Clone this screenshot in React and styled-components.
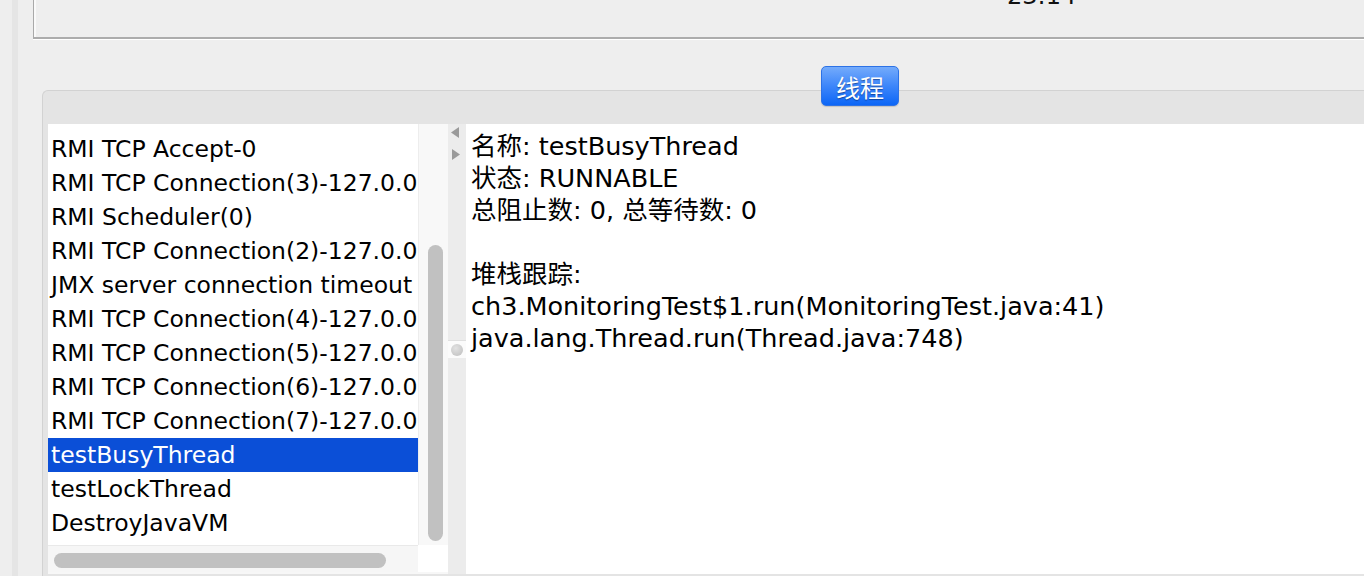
import styled, { createGlobalStyle } from "styled-components";

const GlobalStyle = createGlobalStyle`
  html, body {
    margin: 0;
    padding: 0;
    background: #eeeeee;
    overflow: hidden;
  }
  #root {
    height: 576px;
  }
`;

const Window = styled.div`
  display: flex;
  height: 576px;
  padding-left: 12px;
  box-sizing: border-box;
  overflow: hidden;
  font-family: "DejaVu Sans", "Noto Sans CJK SC", sans-serif;
  color: #000;
`;

const Rail = styled.div`
  width: 6px;
  flex-shrink: 0;
  background: #e5e5e5;
`;

const Main = styled.div`
  flex: 1;
  min-width: 0;
  display: flex;
  flex-direction: column;
  padding-left: 15px;
`;

// etched box that holds the summary above, mostly scrolled out of view
const SummaryBox = styled.div`
  height: 37px;
  flex-shrink: 0;
  display: flex;
  align-items: flex-start;
  padding-left: 973px;
  border-left: 1px solid #a9a9a9;
  border-bottom: 2px solid #acacac;
  box-shadow: 0 1px 0 #ffffff, inset 2px 0 0 #f9f9f9;
  overflow: visible;
`;

const Clock = styled.span`
  margin-top: -18px;
  font-size: 24px;
  line-height: 28px;
  color: #111;
`;

const TabPanel = styled.section`
  flex: 1;
  margin: 51px 0 0 9px;
  padding-left: 5px;
  display: flex;
  flex-direction: column;
  background: #e4e4e4;
  border-top: 1px solid #d2d2d2;
  border-left: 1px solid #d2d2d2;
  border-top-left-radius: 6px;
`;

const TabHeader = styled.div`
  height: 40px;
  margin: -25px 0 18px;
  padding-left: 773px;
  display: flex;
`;

const TabButton = styled.button`
  width: 78px;
  height: 40px;
  padding: 0;
  border: 1px solid #2c72e6;
  border-radius: 5px;
  background: linear-gradient(#74abfb, #3d86fa 50%, #0c66f6);
  color: #fff;
  font-family: "Noto Sans CJK SC", sans-serif;
  font-size: 24px;
  text-shadow: 0 1px 1px rgba(0, 30, 90, 0.55);
  box-shadow: 0 1px 1px rgba(0, 0, 0, 0.15);
`;

const Content = styled.div`
  height: 450px;
  display: flex;
  background: #fff;
`;

const ListPane = styled.div`
  width: 400px;
  flex-shrink: 0;
  display: grid;
  grid-template-columns: 370px 30px;
  grid-template-rows: 421px 27px;
  background: #f7f7f7;
`;

// scrolled to the end: rows above the viewport are clipped
const ListViewport = styled.div`
  overflow: hidden;
  display: flex;
  flex-direction: column;
  justify-content: flex-end;
  padding-bottom: 5px;
  background: #fff;
`;

const Row = styled.div`
  height: 34px;
  box-sizing: border-box;
  flex-shrink: 0;
  padding: 1px 0 0 3px;
  font-size: 23.5px;
  line-height: 33px;
  white-space: nowrap;
  background: ${(p) => (p.$selected ? "#0b4fd7" : "transparent")};
  color: ${(p) => (p.$selected ? "#fff" : "#000")};
`;

const VScroll = styled.div`
  padding: 121px 0 0 9px;
  background: #f8f8f8;
  border-left: 1px solid #ededed;
`;

const VThumb = styled.div`
  width: 15px;
  height: 296px;
  border-radius: 8px;
  background: #c1c1c1;
`;

const HScroll = styled.div`
  padding: 7px 0 0 6px;
  background: #f6f6f6;
  border-top: 1px solid #e9e9e9;
`;

const HThumb = styled.div`
  width: 332px;
  height: 15px;
  border-radius: 8px;
  background: #c1c1c1;
`;

const Corner = styled.div`
  background: #fff;
`;

const Divider = styled.div`
  width: 18px;
  flex-shrink: 0;
  display: flex;
  flex-direction: column;
  background: #ececec;
`;

const Handle = styled.div`
  height: 17px;
  margin-top: 176px;
  display: flex;
  align-items: center;
  justify-content: center;
  background: #fbfbfb;
  border-top: 1px solid #e0e0e0;
`;

const Knob = styled.span`
  width: 12px;
  height: 12px;
  border-radius: 50%;
  background: radial-gradient(circle at 40% 35%, #e2e2e2, #bdbdbd);
`;

const DetailPane = styled.div`
  flex: 1;
  padding: 6px 0 0 5px;
  font-size: 25.5px;
  line-height: 32px;
  white-space: pre;
  background: #fff;
`;

const Line = styled.div`
  height: 32px;
`;

const threads = [
  "Reference Handler",
  "Finalizer",
  "Signal Dispatcher",
  "Attach Listener",
  "RMI TCP Accept-0",
  "RMI TCP Connection(3)-127.0.0.1",
  "RMI Scheduler(0)",
  "RMI TCP Connection(2)-127.0.0.1",
  "JMX server connection timeout 17",
  "RMI TCP Connection(4)-127.0.0.1",
  "RMI TCP Connection(5)-127.0.0.1",
  "RMI TCP Connection(6)-127.0.0.1",
  "RMI TCP Connection(7)-127.0.0.1",
  "testBusyThread",
  "testLockThread",
  "DestroyJavaVM",
];

const details = [
  "名称: testBusyThread",
  "状态: RUNNABLE",
  "总阻止数: 0, 总等待数: 0",
  "",
  "堆栈跟踪:",
  "ch3.MonitoringTest$1.run(MonitoringTest.java:41)",
  "java.lang.Thread.run(Thread.java:748)",
];

function SplitArrows() {
  return (
    <svg width="18" height="40" viewBox="0 0 18 40">
      <path d="M11 3 L3 8.5 L11 14 Z" fill="#9a9a9a" />
      <path d="M4 25 L12 30.5 L4 36 Z" fill="#9a9a9a" />
    </svg>
  );
}

export default function App() {
  return (
    <>
      <GlobalStyle />
      <Window>
        <Rail />
        <Main>
          <SummaryBox>
            <Clock>23:14</Clock>
          </SummaryBox>
          <TabPanel>
            <TabHeader>
              <TabButton>线程</TabButton>
            </TabHeader>
            <Content>
              <ListPane>
                <ListViewport>
                  {threads.map((name) => (
                    <Row key={name} $selected={name === "testBusyThread"}>
                      {name}
                    </Row>
                  ))}
                </ListViewport>
                <VScroll>
                  <VThumb />
                </VScroll>
                <HScroll>
                  <HThumb />
                </HScroll>
                <Corner />
              </ListPane>
              <Divider>
                <SplitArrows />
                <Handle>
                  <Knob />
                </Handle>
              </Divider>
              <DetailPane>
                {details.map((text, i) => (
                  <Line key={i}>{text}</Line>
                ))}
              </DetailPane>
            </Content>
          </TabPanel>
        </Main>
      </Window>
    </>
  );
}
